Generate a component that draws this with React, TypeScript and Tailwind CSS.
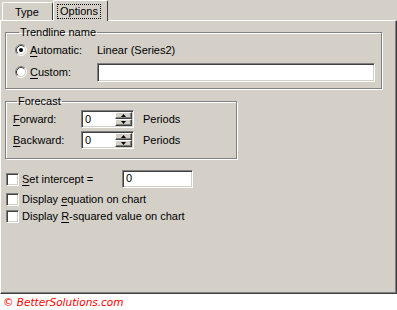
import React from "react";

const sunken =
  "border border-t-[#808080] border-l-[#808080] border-b-white border-r-white shadow-[inset_1px_1px_0_#404040,inset_-1px_-1px_0_#d4d0c8] bg-white";

const groupBox =
  "border border-[#808080] shadow-[1px_1px_0_white,inset_1px_1px_0_white]";

function Radio({ checked }: { checked?: boolean }) {
  return (
    <svg width="12" height="12" viewBox="0 0 12 12" className="shrink-0">
      <circle cx="6" cy="6" r="4.5" fill="white" />
      <path d="M2.11 9.89 A5.5 5.5 0 0 1 9.89 2.11" stroke="#808080" fill="none" />
      <path d="M9.89 2.11 A5.5 5.5 0 0 1 2.11 9.89" stroke="#ffffff" fill="none" />
      <path d="M2.82 9.18 A4.5 4.5 0 0 1 9.18 2.82" stroke="#404040" fill="none" />
      <path d="M9.18 2.82 A4.5 4.5 0 0 1 2.82 9.18" stroke="#d4d0c8" fill="none" />
      {checked && <circle cx="6" cy="6" r="2" fill="black" />}
    </svg>
  );
}

function Checkbox() {
  return <div className={`w-[13px] h-[13px] shrink-0 ${sunken}`} />;
}

function SpinBtn({ up }: { up?: boolean }) {
  return (
    <div className="flex-1 flex items-center justify-center bg-[#d4d0c8] border border-t-white border-l-white border-b-[#404040] border-r-[#404040] shadow-[inset_-1px_-1px_0_#808080]">
      <svg width="5" height="3" viewBox="0 0 5 3">
        {up ? <path d="M2.5 0 L5 3 L0 3 Z" fill="black" /> : <path d="M0 0 L5 0 L2.5 3 Z" fill="black" />}
      </svg>
    </div>
  );
}

function Spinner() {
  return (
    <div className={`w-[53px] h-[18px] flex ${sunken} p-[1px]`}>
      <div className="flex-1 pl-[2px] leading-[14px]">0</div>
      <div className="w-[17px] flex flex-col">
        <SpinBtn up />
        <SpinBtn />
      </div>
    </div>
  );
}

function U({ children }: { children: React.ReactNode }) {
  return <span className="underline underline-offset-2">{children}</span>;
}

export default function App() {
  return (
    <div className="w-[397px] h-[310px] bg-white text-black text-[11px] leading-[13px] font-['Liberation_Sans',Arial,sans-serif]">
      <div className="h-[294px] bg-[#d4d0c8] flex flex-col">
        <div className="h-[20px] flex items-end">
          <div className="ml-[2px] w-[51px] h-[18px] border-l border-t border-r border-l-white border-t-white border-r-[#404040] rounded-t-[2px] pl-[12px] pt-[3px]">
            Type
          </div>
          <div className="relative z-10 -mb-px w-[55px] h-[21px] bg-[#d4d0c8] border-l border-t border-r border-l-white border-t-white border-r-[#404040] rounded-t-[2px] pl-[3px] pt-[3px]">
            <span className="inline-block border border-dotted border-black px-[2px] h-[15px] leading-[13px]">Options</span>
          </div>
        </div>
        <div className="flex-1 border-t border-l border-r border-b border-t-white border-l-white border-r-[#404040] border-b-[#404040] shadow-[inset_-1px_-1px_0_#808080] pl-[4px] pt-[5px]">
          <fieldset className={`w-[377px] ${groupBox} pl-[9px] pr-[5px] pb-[6px]`}>
            <legend className="ml-[4px] px-[1px]">Trendline name</legend>
            <div className="h-[20px] mt-[1px] flex items-center">
              <Radio checked />
              <span className="ml-[3px] w-[67px]"><U>A</U>utomatic:</span>
              <span>Linear (Series2)</span>
            </div>
            <div className="h-[20px] mt-[2px] flex items-center">
              <Radio />
              <span className="ml-[3px] w-[67px]"><U>C</U>ustom:</span>
              <div className={`w-[278px] h-[19px] ${sunken}`} />
            </div>
          </fieldset>

          <fieldset className={`mt-[6px] w-[232px] ${groupBox} pl-[7px] pb-[9px]`}>
            <legend className="ml-[4px] px-[1px]">Forecast</legend>
            <div className="h-[18px] mt-[2px] flex items-center">
              <span className="w-[68px]"><U>F</U>orward:</span>
              <Spinner />
              <span className="ml-[9px]">Periods</span>
            </div>
            <div className="h-[18px] mt-[3px] flex items-center">
              <span className="w-[68px]"><U>B</U>ackward:</span>
              <Spinner />
              <span className="ml-[9px]">Periods</span>
            </div>
          </fieldset>

          <div className="mt-[11px] ml-[1px] h-[18px] flex items-center">
            <Checkbox />
            <span className="ml-[3px] w-[100px]"><U>S</U>et intercept =</span>
            <div className={`w-[71px] h-[18px] pl-[3px] leading-[15px] ${sunken}`}>0</div>
          </div>
          <div className="mt-[3px] ml-[1px] h-[17px] flex items-center">
            <Checkbox />
            <span className="ml-[3px]">Display <U>e</U>quation on chart</span>
          </div>
          <div className="ml-[1px] h-[17px] flex items-center">
            <Checkbox />
            <span className="ml-[3px]">Display <U>R</U>-squared value on chart</span>
          </div>
        </div>
      </div>
      <div className="h-[16px] pl-[3px] flex items-center italic text-[10.5px] text-[#f00] font-['DejaVu_Sans',Verdana,sans-serif]">
        © BetterSolutions.com
      </div>
    </div>
  );
}
